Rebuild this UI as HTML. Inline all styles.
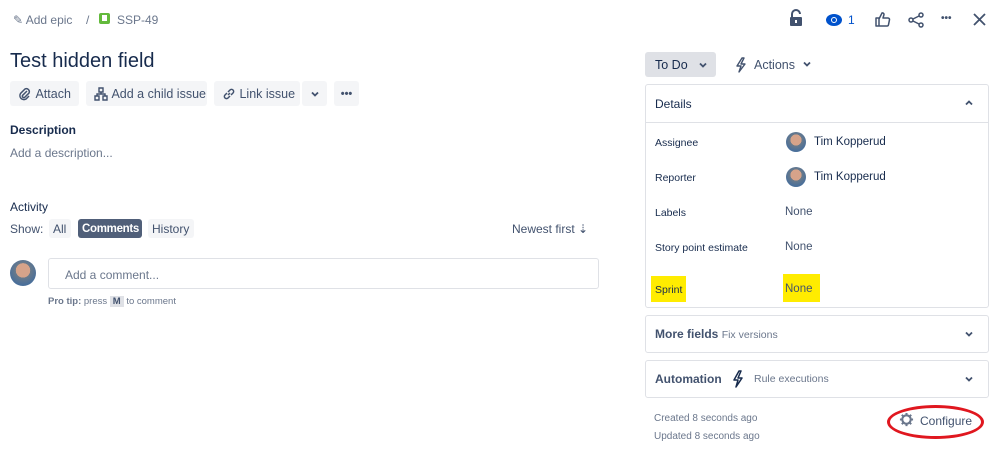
<!DOCTYPE html><html><head><meta charset="utf-8"><style>
*{box-sizing:border-box;margin:0;padding:0}
body{width:999px;height:476px;background:#fff;font-family:"Liberation Sans",sans-serif;color:#172b4d;position:relative;overflow:hidden;font-size:12px}
.a{position:absolute;white-space:nowrap}
.btn{position:absolute;background:#f4f5f7;border-radius:3px;height:25px;display:flex;align-items:center;font-size:12.5px;color:#42526e}
.box{position:absolute;left:645px;width:344px;border:1px solid #dfe1e6;border-radius:3px}
.lbl{position:absolute;left:655px;font-size:10.5px;color:#172b4d}
.val{position:absolute;left:785px;font-size:11.5px;color:#42526e}
.av{width:20px;height:20px;border-radius:50%;background:radial-gradient(circle at 50% 40%,#d6a38a 0 35%,#6a7a8a 36%,#4a6f9a 70%);position:absolute}
</style></head><body>
<svg width="0" height="0" style="position:absolute"><defs><symbol id="cd" viewBox="0 0 10 10"><path d="M2 3.5L5 6.5L8 3.5" fill="none" stroke="#42526e" stroke-width="1.8"/></symbol></defs></svg>
<div class="a" style="left:13px;top:13px;font-size:12px;color:#6b778c">✎ Add epic</div>
<div class="a" style="left:86px;top:13px;font-size:12px;color:#6b778c">/</div>
<div class="a" style="left:99px;top:13px;width:11px;height:11px;background:#63ba3c;border-radius:2px"><div style="position:absolute;left:3px;top:2px;width:5px;height:6px;background:#fff"></div></div>
<div class="a" style="left:117px;top:13px;font-size:12px;color:#6b778c">SSP-49</div>
<div class="a" style="left:10px;top:50px;font-size:20px;color:#172b4d">Test hidden field</div>
<div class="btn" style="left:10px;top:81px;width:69px;padding-left:8px"><svg width="14" height="14" viewBox="0 0 14 14"><path d="M9 4L4.5 8.5a1.5 1.5 0 0 0 2 2L11 6a3 3 0 0 0-4-4L2.5 6.5a4 4 0 0 0 5.5 5.5L11 9" fill="none" stroke="#42526e" stroke-width="1.5"/></svg>&nbsp;Attach</div>
<div class="btn" style="left:86px;top:81px;width:121px;padding-left:8px"><svg width="14" height="14" viewBox="0 0 14 14"><path d="M5 1h4v4H5zM1 9h4v4H1zM9 9h4v4H9zM7 5v2M3 9V7h8v2" fill="none" stroke="#42526e" stroke-width="1.4"/></svg>&nbsp;Add a child issue</div>
<div class="btn" style="left:214px;top:81px;width:86px;padding-left:8px"><svg width="14" height="14" viewBox="0 0 14 14"><path d="M6 8l2-2M5 6L3 8a2 2 0 0 0 3 3l2-2M9 8l2-2a2 2 0 0 0-3-3L6 5" fill="none" stroke="#42526e" stroke-width="1.5"/></svg>&nbsp;Link issue</div>
<div class="btn" style="left:302px;top:81px;width:25px;justify-content:center"><svg width="10" height="10"><use href="#cd"/></svg></div>
<div class="btn" style="left:334px;top:81px;width:25px;justify-content:center;font-weight:bold;font-size:11px">•••</div>
<div class="a" style="left:10px;top:123px;font-size:12px;font-weight:bold;color:#172b4d">Description</div>
<div class="a" style="left:10px;top:146px;font-size:12px;color:#6b778c">Add a description...</div>
<div class="a" style="left:10px;top:200px;font-size:12px;color:#172b4d">Activity</div>
<div class="a" style="left:10px;top:222px;font-size:12px;color:#42526e">Show:</div>
<div class="btn" style="left:49px;top:219px;width:22px;height:19px;padding-left:4px;font-size:12px">All</div>
<div class="btn" style="left:78px;top:219px;width:64px;height:19px;padding-left:4px;background:#505f79;color:#fff;font-weight:bold;font-size:11.5px;letter-spacing:-0.3px">Comments</div>
<div class="btn" style="left:148px;top:219px;width:46px;height:19px;padding-left:4px;font-size:12px">History</div>
<div class="a" style="left:512px;top:222px;font-size:12px;color:#42526e">Newest first ⇣</div>
<div class="av" style="left:10px;top:260px;width:26px;height:26px"></div>
<div class="a" style="left:48px;top:258px;width:551px;height:31px;border:1px solid #dfe1e6;border-radius:3px;font-size:12px;color:#6b778c;padding:9px 16px">Add a comment...</div>
<div class="a" style="left:48px;top:296px;font-size:9.5px;color:#6b778c"><b>Pro tip:</b> press <span style="background:#dfe1e6;padding:0 3px;font-weight:bold;color:#42526e">M</span> to comment</div>
<!-- top right icons -->
<svg class="a" style="left:789px;top:9px" width="14" height="17" viewBox="0 0 14 17"><path d="M3 8V5a4 4 0 0 1 8 0" fill="none" stroke="#42526e" stroke-width="2"/><rect x="1" y="8" width="12" height="9" rx="1" fill="#42526e"/><rect x="6" y="11" width="2" height="3" fill="#fff"/></svg>
<div class="a" style="left:826px;top:14px;width:16px;height:12px;background:#0052cc;border-radius:50%"><div style="position:absolute;left:5px;top:3px;width:6px;height:6px;border:1.5px solid #fff;border-radius:50%"></div></div>
<div class="a" style="left:848px;top:13px;font-size:12px;color:#0052cc">1</div>
<svg class="a" style="left:875px;top:11px" width="16" height="16" viewBox="0 0 16 16"><path d="M1 7h3v8H1zM4 8l3-6a1.5 1.5 0 0 1 2 1.5L8 7h5a1.5 1.5 0 0 1 1.5 1.7l-1 5A1.5 1.5 0 0 1 12 15H4" fill="none" stroke="#42526e" stroke-width="1.5" stroke-linejoin="round"/></svg>
<svg class="a" style="left:908px;top:12px" width="16" height="16" viewBox="0 0 16 16"><circle cx="13" cy="3" r="2" fill="none" stroke="#42526e" stroke-width="1.5"/><circle cx="3" cy="8" r="2" fill="none" stroke="#42526e" stroke-width="1.5"/><circle cx="13" cy="13" r="2" fill="none" stroke="#42526e" stroke-width="1.5"/><path d="M5 7L11 4M5 9L11 12" stroke="#42526e" stroke-width="1.5"/></svg>
<div class="a" style="left:941px;top:13px;font-size:10px;color:#42526e;font-weight:bold">•••</div>
<svg class="a" style="left:973px;top:13px" width="13" height="13"><path d="M1 1L12 12M12 1L1 12" stroke="#42526e" stroke-width="1.8"/></svg>
<!-- status -->
<div class="btn" style="left:645px;top:52px;width:71px;padding-left:10px;color:#172b4d;background:#dfe1e6">To Do&nbsp;&nbsp;&nbsp;<svg width="10" height="10"><use href="#cd"/></svg></div>
<svg class="a" style="left:734px;top:57px" width="14" height="16" viewBox="0 0 14 16"><path d="M8 1L3 9h4l-2 6 6-8H7l3-6z" fill="none" stroke="#42526e" stroke-width="1.4" stroke-linejoin="round"/></svg>
<div class="a" style="left:754px;top:58px;font-size:12.5px;color:#42526e">Actions&nbsp;&nbsp;<svg width="10" height="10"><use href="#cd"/></svg></div>
<div class="box" style="top:84px;height:224px"><div style="height:38px;border-bottom:1px solid #dfe1e6"></div></div>
<div class="a" style="left:655px;top:97px;font-size:12px;color:#172b4d">Details</div>
<svg class="a" style="left:964px;top:98px" width="10" height="10" style="transform:rotate(180deg)"><path d="M2 6.5L5 3.5L8 6.5" fill="none" stroke="#42526e" stroke-width="1.8"/></svg>
<div class="lbl" style="top:137px">Assignee</div><div class="av" style="left:786px;top:132px"></div><div class="val" style="left:814px;top:136px;color:#172b4d">Tim Kopperud</div>
<div class="lbl" style="top:172px">Reporter</div><div class="av" style="left:786px;top:167px"></div><div class="val" style="left:814px;top:171px;color:#172b4d">Tim Kopperud</div>
<div class="lbl" style="top:207px">Labels</div><div class="val" style="top:206px">None</div>
<div class="lbl" style="top:242px">Story point estimate</div><div class="val" style="top:241px">None</div>
<div class="a" style="left:651px;top:276px;width:35px;height:26px;background:#ffec00"></div>
<div class="lbl" style="top:284px">Sprint</div>
<div class="a" style="left:783px;top:274px;width:37px;height:28px;background:#ffec00"></div>
<div class="val" style="top:283px">None</div>
<div class="box" style="top:315px;height:38px"></div>
<div class="a" style="left:655px;top:327px;font-size:12px;font-weight:bold;color:#42526e">More fields <span style="font-weight:normal;font-size:10.5px;color:#6b778c">Fix versions</span></div>
<svg class="a" style="left:964px;top:329px" width="10" height="10"><use href="#cd"/></svg>
<div class="box" style="top:360px;height:38px"></div>
<div class="a" style="left:655px;top:372px;font-size:12px;font-weight:bold;color:#42526e">Automation</div>
<svg class="a" style="left:731px;top:370px" width="14" height="18" viewBox="0 0 14 18"><path d="M8 1L3 10h4l-2 7 6-9H7l3-7z" fill="none" stroke="#172b4d" stroke-width="1.5" stroke-linejoin="round"/></svg>
<div class="a" style="left:754px;top:373px;font-size:10.5px;color:#6b778c">Rule executions</div>
<svg class="a" style="left:964px;top:374px" width="10" height="10"><use href="#cd"/></svg>
<div class="a" style="left:654px;top:413px;font-size:10px;color:#6b778c">Created 8 seconds ago</div>
<div class="a" style="left:654px;top:431px;font-size:10px;color:#6b778c">Updated 8 seconds ago</div>
<div class="a" style="left:887px;top:405px;width:97px;height:34px;border:3px solid #e0171f;border-radius:50%"></div>
<svg class="a" style="left:899px;top:412px" width="15" height="15" viewBox="0 0 16 16"><circle cx="8" cy="8" r="4.5" fill="none" stroke="#6b778c" stroke-width="2.2"/><path d="M8 1v3M8 12v3M1 8h3M12 8h3M3 3l2 2M11 11l2 2M13 3l-2 2M5 11l-2 2" stroke="#6b778c" stroke-width="2.2"/></svg>
<div class="a" style="left:920px;top:414px;font-size:12px;color:#42526e">Configure</div>
</body></html>
